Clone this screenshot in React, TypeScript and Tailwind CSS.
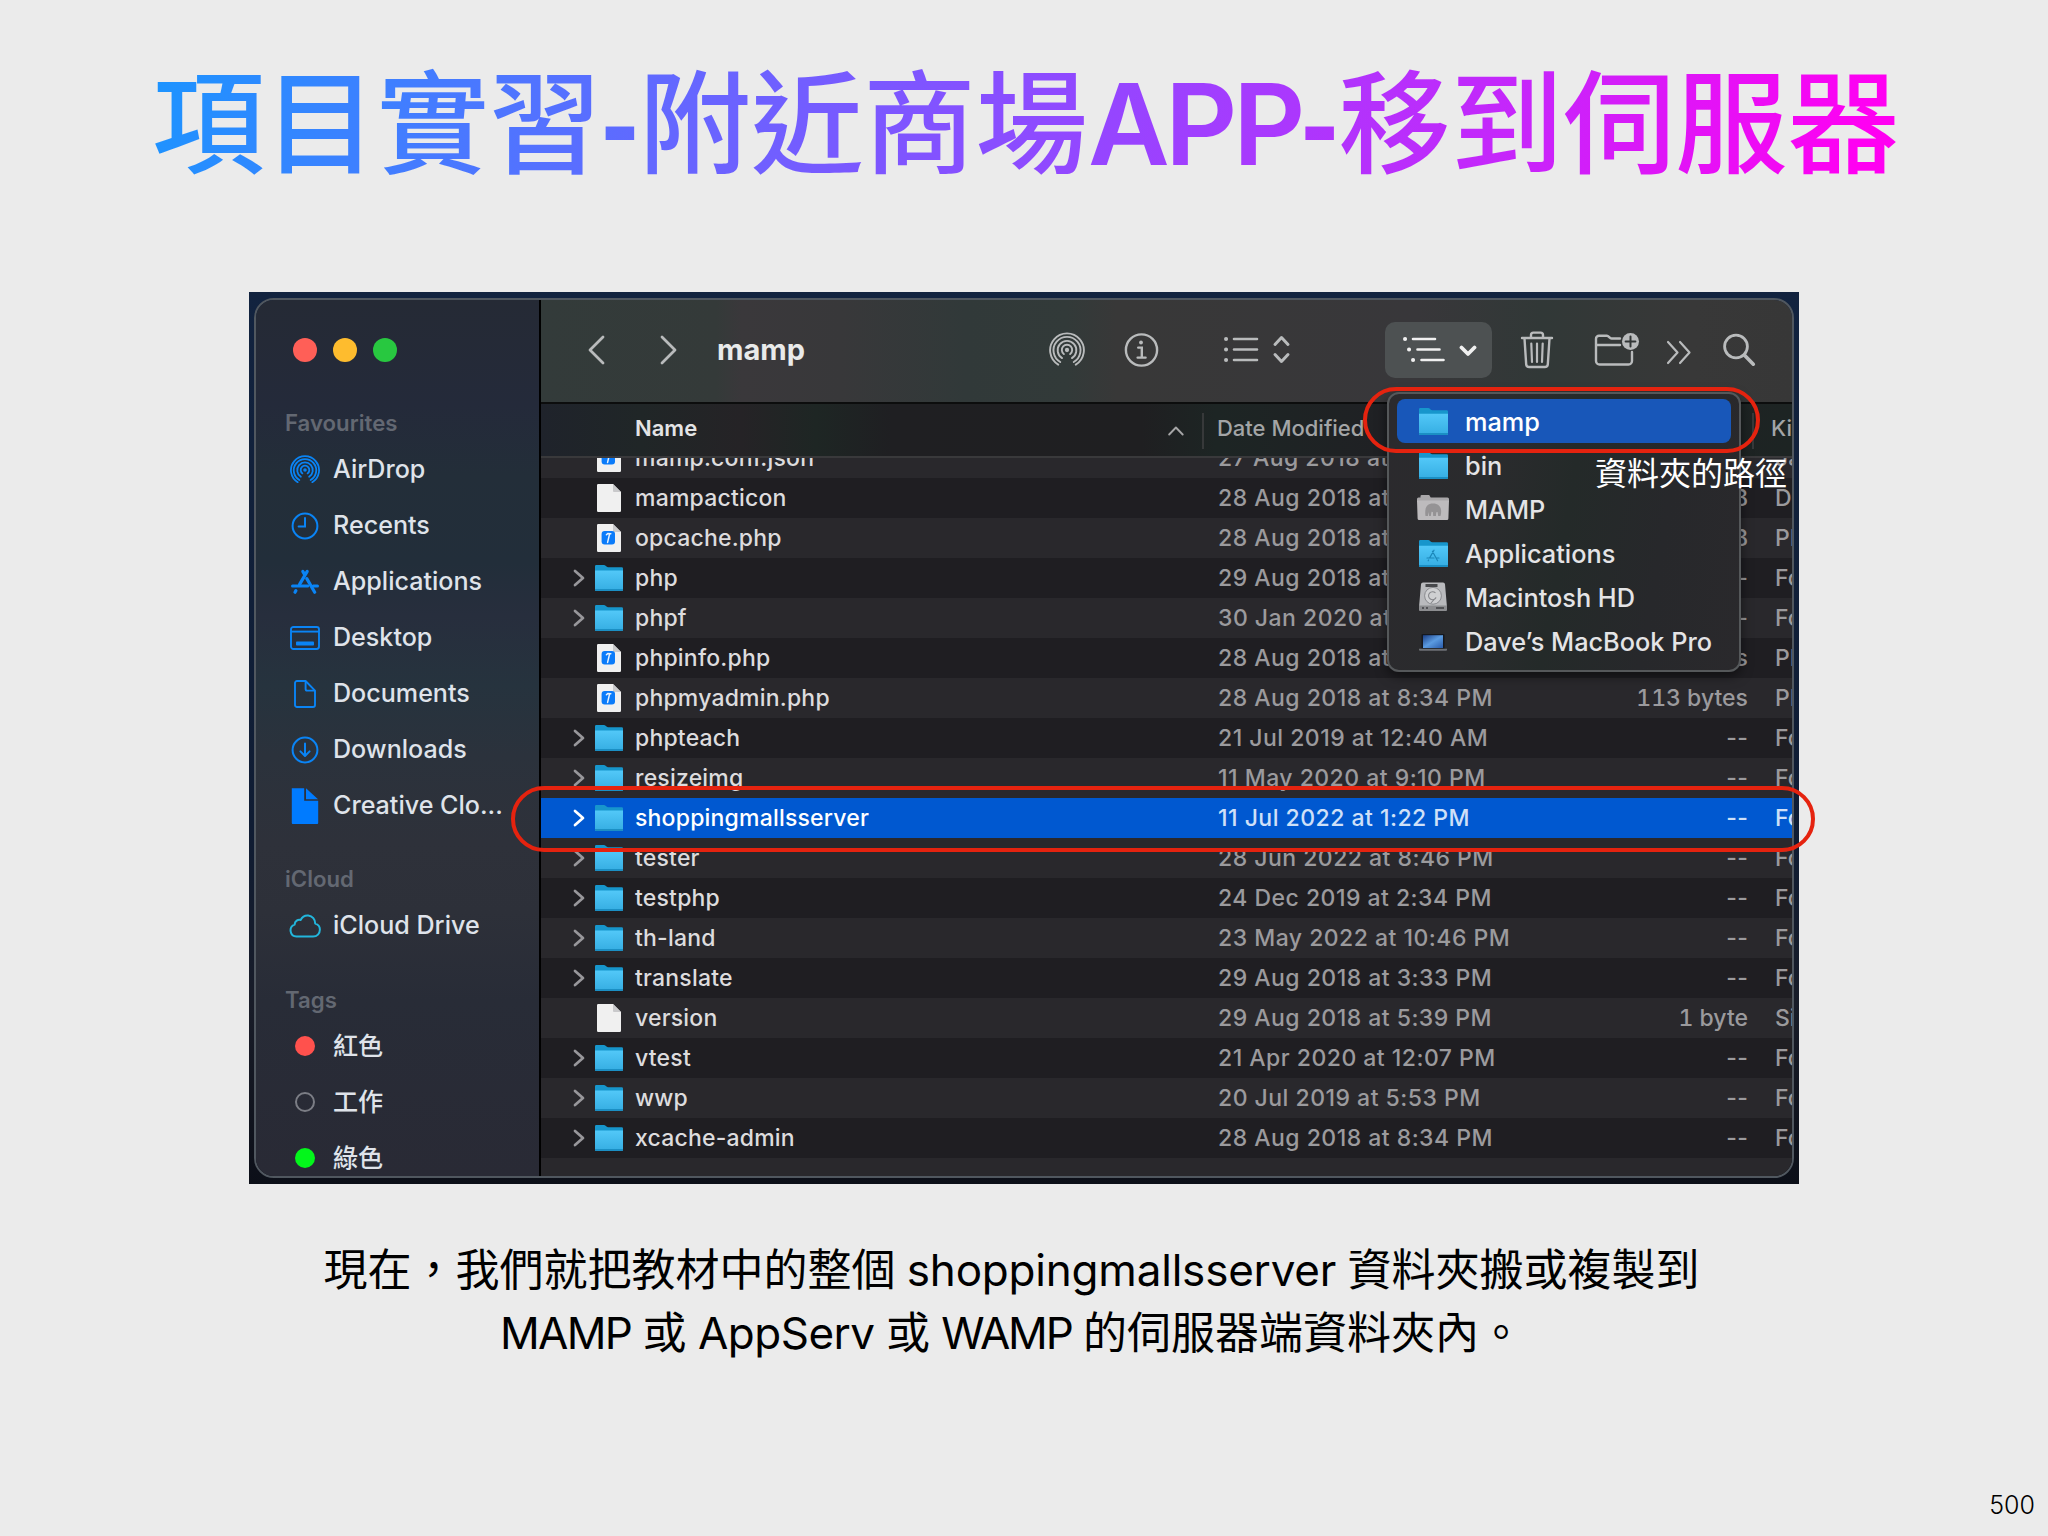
import React from "react";

const UI = "font-['Inter','Noto_Sans_CJK_TC',sans-serif]";

/* ---------- icons ---------- */

function AirDropIcon({ className, sw = 1.7 }: { className: string; sw?: number }) {
  return (
    <svg viewBox="0 0 32 32" className={className} fill="none" stroke="currentColor" strokeWidth={sw} strokeLinecap="round">
      <circle cx="16" cy="16" r="1.9" fill="currentColor" stroke="none" />
      <path d="M13.2 19.6a4.6 4.6 0 1 1 5.6 0" />
      <path d="M11.6 23.2a8.3 8.3 0 1 1 8.8 0" />
      <path d="M10 26.7a12 12 0 1 1 12 0" />
      <path d="M8.2 29a15 15 0 1 1 15.6 0" />
    </svg>
  );
}

function ClockIcon() {
  return (
    <svg viewBox="0 0 28 28" className="h-7 w-7" fill="none" stroke="currentColor" strokeWidth="2" strokeLinecap="round">
      <circle cx="14" cy="14" r="12.4" />
      <path d="M14 6v8.4H7.6" />
    </svg>
  );
}

function AppsIcon({ className = "h-7 w-7" }: { className?: string }) {
  return (
    <svg viewBox="0 0 28 28" className={className} fill="none" stroke="currentColor" strokeWidth="3.2" strokeLinecap="round">
      <path d="M11.8 3.4l1.6 2.8M16.2 3.4L8.6 16.4" />
      <path d="M1.5 18h15.2M22.2 18h4.3" strokeWidth="3" />
      <path d="M15.8 10.6l7.9 13.6" />
      <path d="M4.9 22.6l-.9 1.6" />
    </svg>
  );
}

function DesktopIcon() {
  return (
    <svg viewBox="0 0 30 24" className="h-6 w-[30px]" fill="none" stroke="currentColor" strokeWidth="1.9">
      <rect x="1" y="1" width="28" height="22" rx="2.4" />
      <path d="M1 5.6h28" />
      <rect x="6" y="15.6" width="18" height="4" rx=".8" fill="currentColor" stroke="none" />
    </svg>
  );
}

function DocIcon() {
  return (
    <svg viewBox="0 0 22 28" className="h-7 w-[22px]" fill="none" stroke="currentColor" strokeWidth="1.9" strokeLinejoin="round">
      <path d="M3 1h8.6L21 10.6V25a2 2 0 0 1-2 2H3a2 2 0 0 1-2-2V3a2 2 0 0 1 2-2z" />
      <path d="M11.6 1v8a1.6 1.6 0 0 0 1.6 1.6H21" />
    </svg>
  );
}

function DownloadIcon() {
  return (
    <svg viewBox="0 0 28 28" className="h-7 w-7" fill="none" stroke="currentColor" strokeWidth="2" strokeLinecap="round" strokeLinejoin="round">
      <circle cx="14" cy="14" r="12.4" />
      <path d="M14 7.6v12.2M9.4 15.4l4.6 4.6 4.6-4.6" />
    </svg>
  );
}

function SolidDocIcon() {
  return (
    <svg viewBox="0 0 28 38" className="h-[38px] w-7 text-[#007bff]" fill="currentColor">
      <path d="M.8 1.2h12.4v12.6h14V36a1 1 0 0 1-1 1H1.8a1 1 0 0 1-1-1z" />
      <path d="M15 1.2l12 11H15z" />
    </svg>
  );
}

function CloudIcon() {
  return (
    <svg viewBox="0 0 32 24" className="h-6 w-8 text-[#22b6dc]" fill="none" stroke="currentColor" strokeWidth="2" strokeLinejoin="round">
      <path d="M7.5 22.6a6.2 6.2 0 0 1-1.9-12c.2-3.7 3.4-5.4 6-4.6 1.6-3 4.4-4.7 7.6-4.4 4.3.4 7 3.9 7 8 2.9.8 4.7 3 4.7 6 0 4-2.9 7-6.8 7z" />
    </svg>
  );
}

function Folder({ className = "h-[26px] w-7" }: { className?: string }) {
  return (
    <svg viewBox="0 0 28 26" className={className} preserveAspectRatio="none">
      <defs>
        <linearGradient id="fld" x1="0" y1="0" x2="0" y2="1">
          <stop offset="0" stopColor="#52c8f8" />
          <stop offset="1" stopColor="#35ade2" />
        </linearGradient>
      </defs>
      <path d="M0 1.2A1.2 1.2 0 0 1 1.2 0h7.6c1.6 0 2.6 2.2 4.2 2.2h13.800A1.2 1.2 0 0 1 28 3.4V8H0z" fill="#1796cc" />
      <path d="M0 5.6h28v19.2a1.2 1.2 0 0 1-1.2 1.2H1.2A1.2 1.2 0 0 1 0 24.8z" fill="url(#fld)" />
      <path d="M0 24h28v.8a1.2 1.2 0 0 1-1.2 1.2H1.2A1.2 1.2 0 0 1 0 24.8z" fill="#1b8fc4" />
    </svg>
  );
}

function FileIcon({ badge }: { badge?: boolean }) {
  return (
    <svg viewBox="0 0 24 28" className="h-7 w-6">
      <path d="M1.2 0H16l8 8v18.8a1.2 1.2 0 0 1-1.2 1.2H1.2A1.2 1.2 0 0 1 0 26.8V1.2A1.2 1.2 0 0 1 1.2 0z" fill="#f0f0f0" />
      <path d="M16 0l8 8h-7a1 1 0 0 1-1-1z" fill="#c9c9cb" />
      {badge && <rect x="4.6" y="7" width="13.4" height="13.6" rx="3" fill="#0a7bfa" />}
      {badge && <path d="M9.4 10.8l1.4-1.2 3 .2M12.6 9.8L10.6 18.4" stroke="#e6f1ff" strokeWidth="1.5" fill="none" strokeLinecap="round" />}
    </svg>
  );
}

function MampFolder() {
  return (
    <svg viewBox="0 0 32 30" className="h-[30px] w-8">
      <path d="M0 5a1.5 1.5 0 0 1 1.5-1.5h2V2.2A1.2 1.2 0 0 1 4.7 1h7.5l1.5 2.5h16.8A1.5 1.5 0 0 1 32 5v3H0z" fill="#a9a7a9" />
      <path d="M0 6.5h32l-.6 18a1.5 1.5 0 0 1-1.5 1.5H2.1a1.5 1.5 0 0 1-1.5-1.5z" fill="#bdbbbd" />
      <path d="M8.5 22c-1-7 .5-12.500 7.500-12.500s9.500 5.500 7.500 12.500h-2.300l-.6-4-1.300.2-.4 3.800h-2.700l-.3-4-1.400-.2-.7 4.200h-1.700l-.4-4-.8 4z" fill="#959395" />
    </svg>
  );
}

function AppsFolder() {
  return (
    <span className="relative flex h-[27px] w-[29px]">
      <Folder className="h-[27px] w-[29px]" />
      <span className="absolute inset-x-0 top-[9px] flex justify-center text-[#1b86b8]">
        <svg viewBox="0 0 14 14" className="h-3.5 w-3.5" fill="none" stroke="currentColor" strokeWidth="1.2" strokeLinecap="round">
          <path d="M8 1.2L3.8 8.6M6.4 2.2l5.2 9.6M1 9h7M10.800 9H13M2.600 11l-.4.8" />
        </svg>
      </span>
    </span>
  );
}

function DiskIcon() {
  return (
    <svg viewBox="0 0 28 30" className="h-[30px] w-7">
      <path d="M4 .5h20a2 2 0 0 1 2 1.800l1.800 20.700v4.500a1.500 1.500 0 0 1-1.500 1.500H1.700A1.500 1.500 0 0 1 .2 27.500V23L2 2.300A2 2 0 0 1 4 .5z" fill="#b9babd" />
      <path d="M.2 23.500h27.600v4a1.500 1.500 0 0 1-1.500 1.500H1.700a1.500 1.500 0 0 1-1.500-1.500z" fill="#8c8d90" />
      <rect x="6.500" y="2" width="12" height="3" fill="#47484b" />
      <circle cx="14" cy="13.800" r="8.400" fill="#cfd0d2" stroke="#85868a" strokeWidth=".9" />
      <path d="M16.500 11a4 4 0 1 0 .6 4.500M17 15.500l-5 5.500" fill="none" stroke="#85868a" strokeWidth="1.100" />
      <path d="M3 26h2M7 26h2M17 26h8" stroke="#3f4043" strokeWidth="1.400" />
    </svg>
  );
}

function LaptopIcon() {
  return (
    <svg viewBox="0 0 28 20" className="mt-1 h-5 w-7">
      <defs>
        <linearGradient id="scr" x1="0" y1="0" x2="1" y2="1">
          <stop offset="0" stopColor="#1b3f86" />
          <stop offset=".5" stopColor="#5b9be0" />
          <stop offset="1" stopColor="#2a5cab" />
        </linearGradient>
      </defs>
      <rect x="2.500" y="1" width="23" height="15.500" rx="1" fill="#15181f" />
      <rect x="4" y="2.200" width="20" height="12.800" fill="url(#scr)" />
      <path d="M0 15.800h28v1a1 1 0 0 1-1 1H1a1 1 0 0 1-1-1z" fill="#6d7075" />
    </svg>
  );
}

/* ---------- data ---------- */

type Row = { n: string; t: "d" | "f" | "c"; date: string; size: string; kind: string; sel?: boolean };
const rows: Row[] = [
  { n: "mamp.conf.json", t: "c", date: "27 Aug 2018 at", size: "", kind: "Ja" },
  { n: "mampacticon", t: "f", date: "28 Aug 2018 at", size: "KB", kind: "Do" },
  { n: "opcache.php", t: "c", date: "28 Aug 2018 at", size: "KB", kind: "PH" },
  { n: "php", t: "d", date: "29 Aug 2018 at", size: "--", kind: "Fo" },
  { n: "phpf", t: "d", date: "30 Jan 2020 at", size: "--", kind: "Fo" },
  { n: "phpinfo.php", t: "c", date: "28 Aug 2018 at", size: "bytes", kind: "PH" },
  { n: "phpmyadmin.php", t: "c", date: "28 Aug 2018 at 8:34 PM", size: "113 bytes", kind: "PH" },
  { n: "phpteach", t: "d", date: "21 Jul 2019 at 12:40 AM", size: "--", kind: "Fo" },
  { n: "resizeimg", t: "d", date: "11 May 2020 at 9:10 PM", size: "--", kind: "Fo" },
  { n: "shoppingmallsserver", t: "d", date: "11 Jul 2022 at 1:22 PM", size: "--", kind: "Fo", sel: true },
  { n: "tester", t: "d", date: "28 Jun 2022 at 8:46 PM", size: "--", kind: "Fo" },
  { n: "testphp", t: "d", date: "24 Dec 2019 at 2:34 PM", size: "--", kind: "Fo" },
  { n: "th-land", t: "d", date: "23 May 2022 at 10:46 PM", size: "--", kind: "Fo" },
  { n: "translate", t: "d", date: "29 Aug 2018 at 3:33 PM", size: "--", kind: "Fo" },
  { n: "version", t: "f", date: "29 Aug 2018 at 5:39 PM", size: "1 byte", kind: "Si" },
  { n: "vtest", t: "d", date: "21 Apr 2020 at 12:07 PM", size: "--", kind: "Fo" },
  { n: "wwp", t: "d", date: "20 Jul 2019 at 5:53 PM", size: "--", kind: "Fo" },
  { n: "xcache-admin", t: "d", date: "28 Aug 2018 at 8:34 PM", size: "--", kind: "Fo" },
];

const favourites = [
  { icon: <AirDropIcon className="h-[30px] w-[30px]" sw={1.9} />, label: "AirDrop" },
  { icon: <ClockIcon />, label: "Recents" },
  { icon: <AppsIcon />, label: "Applications" },
  { icon: <DesktopIcon />, label: "Desktop" },
  { icon: <DocIcon />, label: "Documents" },
  { icon: <DownloadIcon />, label: "Downloads" },
  { icon: <SolidDocIcon />, label: "Creative Clo..." },
];

const tags = [
  { dot: "bg-[#ff514d]", label: "紅色" },
  { dot: "border-2 border-[#7b7d85]", label: "工作" },
  { dot: "bg-[#03f61b]", label: "綠色" },
];

const pathMenu = [
  { icon: <Folder className="h-[27px] w-[29px]" />, label: "mamp", active: true },
  { icon: <Folder className="h-[27px] w-[29px]" />, label: "bin" },
  { icon: <MampFolder />, label: "MAMP" },
  { icon: <AppsFolder />, label: "Applications" },
  { icon: <DiskIcon />, label: "Macintosh HD" },
  { icon: <LaptopIcon />, label: "Dave’s MacBook Pro" },
];

/* ---------- pieces ---------- */

function SideItem({ icon, label }: { icon: React.ReactNode; label: string }) {
  return (
    <div className="flex h-14 items-center pt-px text-[25.1px] font-medium text-[#dfe3ea]">
      <span className="flex w-8 shrink-0 justify-center text-[#0a84f5]">{icon}</span>
      <span className="ml-3 whitespace-nowrap">{label}</span>
    </div>
  );
}

function SideHead({ children, className }: { children: string; className: string }) {
  return (
    <div className={`flex h-9 items-center text-[22.2px] font-semibold text-[#636872] ${className}`}>
      <span>{children}</span>
    </div>
  );
}

function Sidebar() {
  return (
    <aside className="flex w-[283px] shrink-0 flex-col overflow-hidden bg-[linear-gradient(180deg,#252a35_0%,#242a3a_12%,#232e39_20%,#222e3a_30%,#272e3d_36%,#26333e_44%,#2b323c_52%,#2e313a_62%,#2d3039_70%,#282c37_80%,#292a35_100%)] pl-[29px]">
      <div className="mt-[38px] flex gap-4 pl-2">
        <i className="h-6 w-6 rounded-full bg-[#ff5f57]" />
        <i className="h-6 w-6 rounded-full bg-[#febc2e]" />
        <i className="h-6 w-6 rounded-full bg-[#28c840]" />
      </div>
      <SideHead className="mt-11">Favourites</SideHead>
      <div className="mt-0.5 pl-1">
        {favourites.map((f) => (
          <SideItem key={f.label} {...f} />
        ))}
      </div>
      <SideHead className="mt-[29px]">iCloud</SideHead>
      <div className="mt-0.5 pl-1">
        <SideItem icon={<CloudIcon />} label="iCloud Drive" />
      </div>
      <SideHead className="mt-[29px]">Tags</SideHead>
      <div className="mt-0.5 pl-1">
        {tags.map((t) => (
          <SideItem key={t.label} icon={<i className={`h-5 w-5 rounded-full ${t.dot}`} />} label={t.label} />
        ))}
      </div>
    </aside>
  );
}

function Toolbar() {
  return (
    <div className="flex h-[102px] shrink-0 items-center bg-[linear-gradient(90deg,#333b3a_0%,#343a39_14%,#3a383b_16%,#38383a_24%,#313939_34%,#323a39_42%,#383838_46%,#38373a_70%,#313837_80%,#383838_92%,#373737_100%)] pb-[3px] pl-[45px] text-[#b9bbbc]">
      <svg viewBox="0 0 20 32" className="h-8 w-5" fill="none" stroke="currentColor" strokeWidth="2.8" strokeLinecap="round" strokeLinejoin="round">
        <path d="M17 3L4 16l13 13" />
      </svg>
      <svg viewBox="0 0 20 32" className="ml-[52px] h-8 w-5" fill="none" stroke="currentColor" strokeWidth="2.8" strokeLinecap="round" strokeLinejoin="round">
        <path d="M4 3l13 13L4 29" />
      </svg>
      <span className="ml-[39px] w-[332px] text-[29px] font-bold text-[#e9eaea]">mamp</span>
      <AirDropIcon className="h-9 w-9" />
      <svg viewBox="0 0 36 36" className="ml-[39px] h-9 w-9" fill="none" stroke="currentColor" strokeWidth="2.4" strokeLinecap="round">
        <circle cx="17.5" cy="18" r="15.6" />
        <circle cx="17" cy="10.5" r="1.9" fill="currentColor" stroke="none" />
        <path d="M14.2 15.6h3.6v9.4M13.6 25.6h8" />
      </svg>
      <svg viewBox="0 0 68 32" className="ml-[63px] h-8 w-[68px]" fill="none" stroke="currentColor" strokeWidth="2.6" strokeLinecap="round" strokeLinejoin="round">
        <path d="M11 5h23M11 15.5h23M11 26h23" />
        <path d="M3 5h.1M3 15.5h.1M3 26h.1" strokeWidth="4" />
        <path d="M52 10.5L58.5 3.5 65 10.5M52 20.5l6.5 7 6.5-7" strokeWidth="3" />
      </svg>
      <div className="ml-[94px] flex h-14 w-[107px] items-center justify-center rounded-[10px] bg-[#4d5152] text-[#f0f0f0]">
        <svg viewBox="0 0 76 32" className="h-8 w-[76px]" fill="none" stroke="currentColor" strokeWidth="2.6" strokeLinecap="round" strokeLinejoin="round">
          <path d="M12 5h22M16.500 15.500h22M20.500 26h22" />
          <path d="M4 5h.1M8 15.500h.1M12 26h.1" strokeWidth="4" />
          <path d="M60.500 13.500l6.500 6.500 6.500-6.500" strokeWidth="3.800" />
        </svg>
      </div>
      <svg viewBox="0 0 34 38" className="ml-[28px] h-[38px] w-[34px]" fill="none" stroke="currentColor" strokeWidth="2.4" strokeLinecap="round" strokeLinejoin="round">
        <path d="M2 7h30M11 6.500V4a2.400 2.400 0 0 1 2.400-2.400h7.200A2.400 2.400 0 0 1 23 4v2.500" />
        <path d="M4.500 7.500l1.700 25.800A3 3 0 0 0 9.200 36h15.600a3 3 0 0 0 3-2.700L29.500 7.500" />
        <path d="M11.300 12.500l.7 18.500M17 12.500V31M22.700 12.500L22 31" strokeWidth="2.200" />
      </svg>
      <svg viewBox="0 0 46 36" className="ml-[40px] h-9 w-[46px]" fill="none" stroke="currentColor" strokeWidth="2.4" strokeLinecap="round" strokeLinejoin="round">
        <path d="M26 6.500H17.500c-2 0-2.600-2.700-4.600-2.700H5A3 3 0 0 0 2 6.800V29a3.500 3.500 0 0 0 3.500 3.500h29A3.500 3.500 0 0 0 38 29V20M2 13h24" />
        <circle cx="36.500" cy="9.500" r="8.500" fill="currentColor" stroke="none" />
        <path d="M36.500 4.600v9.800M31.600 9.500h9.800" stroke="#323636" strokeWidth="2" />
      </svg>
      <svg viewBox="0 0 28 26" className="ml-[25px] mt-1 h-[26px] w-7" fill="none" stroke="currentColor" strokeWidth="2.2" strokeLinecap="round" strokeLinejoin="round">
        <path d="M3 3l9.500 10.500L3 24M15 3l9.500 10.500L15 24" />
      </svg>
      <svg viewBox="0 0 34 34" className="ml-[29px] h-[34px] w-[34px]" fill="none" stroke="currentColor" strokeWidth="2.8" strokeLinecap="round">
        <circle cx="14" cy="13.500" r="11.400" />
        <path d="M22.300 22l9 9.200" strokeWidth="3.600" />
      </svg>
    </div>
  );
}

function ListHeader() {
  return (
    <div className="flex h-14 shrink-0 items-center border-b-2 border-t-2 border-b-[#39393b] border-t-[#0c0d0d] bg-[linear-gradient(90deg,#1f232b_0%,#202627_8%,#252326_16%,#1e2624_22%,#1f1f22_28%,#1f1f21_48%,#1d2524_54%,#202024_70%,#1d2423_100%)] pb-[3px]">
      <span className="ml-[94px] w-[538px] text-[22px] font-semibold text-[#e4e4e5]">Name</span>
      <svg viewBox="0 0 16 10" className="mt-1 h-2.5 w-4" fill="none" stroke="#a5a5a6" strokeWidth="1.9" strokeLinecap="round" strokeLinejoin="round">
        <path d="M1.200 8.500L8 1.500l6.800 7" />
      </svg>
      <i className="ml-[18px] mt-1 h-9 w-0.5 bg-[#37393a]" />
      <span className="ml-[13px] w-[540px] text-[22px] font-medium text-[#a3a5a6]">Date Modified</span>
      <i className="mt-1 h-9 w-0.5 bg-[#37393a]" />
      <span className="ml-[17px] text-[22px] font-medium text-[#a3a5a6]">Ki</span>
    </div>
  );
}

function FileRow({ r, i }: { r: Row; i: number }) {
  const bg = r.sel ? "bg-[#0058d0]" : i % 2 === 0 ? "bg-[#29282c]" : "bg-[#1f1e22]";
  const meta = r.sel ? "text-[#cfe0f8]" : "text-[#9b9a9d]";
  const sizeStyle = r.size === "--" ? "tracking-[0.2px]" : "tabular-nums";
  return (
    <div className={`flex h-10 shrink-0 items-center whitespace-nowrap text-[23px] font-medium ${bg}`}>
      <span className="ml-8 flex w-3 shrink-0 justify-center">
        {r.t === "d" && (
          <svg viewBox="0 0 12 18" className="h-[18px] w-3" fill="none" stroke={r.sel ? "#ffffff" : "#98979b"} strokeWidth="2.7" strokeLinecap="round" strokeLinejoin="round">
            <path d="M2 2l8 7-8 7" />
          </svg>
        )}
      </span>
      <span className="ml-2.5 flex w-7 shrink-0 justify-center">
        {r.t === "d" ? <Folder /> : <FileIcon badge={r.t === "c"} />}
      </span>
      <span className={`ml-3 shrink-0 tracking-[0.2px] ${r.sel ? "text-white" : "text-[#dddcde]"}`}>{r.n}</span>
      <span className="grow" />
      <span className={`w-[400px] shrink-0 tracking-[0.48px] ${meta}`}>{r.date}</span>
      <span className={`w-[130px] shrink-0 text-right ${sizeStyle} ${meta}`}>{r.size}</span>
      <span className={`ml-[27px] w-[17px] shrink-0 overflow-hidden ${meta}`}>{r.kind}</span>
    </div>
  );
}

function PathMenu() {
  return (
    <div className="absolute left-[1138px] top-[100px] flex h-[280px] w-[354px] flex-col rounded-xl border-2 border-[#55585a] bg-[linear-gradient(100deg,#2b2a2d_0%,#2a2b2d_30%,#242a29_50%,#27282b_75%,#2a292c_100%)] px-2 pt-[5px] shadow-[0_4px_12px_rgba(0,0,0,0.5)]">
      {pathMenu.map((m) => (
        <div key={m.label} className={`flex h-11 shrink-0 items-center rounded-lg text-[25.3px] font-medium ${m.active ? "bg-[#1857b9] text-white" : "text-[#e4e4e6]"}`}>
          <span className="ml-5 flex w-8 shrink-0 justify-center">{m.icon}</span>
          <span className="ml-4 whitespace-nowrap pt-0.5">{m.label}</span>
        </div>
      ))}
    </div>
  );
}

function FinderShot() {
  return (
    <figure className={`relative mx-auto mt-[102px] h-[892px] w-[1550px] bg-[linear-gradient(180deg,#12233f_0%,#0f1c33_60%,#181c28_80%,#0c0f18_100%)] pl-[5px] pt-1.5 ${UI}`}>
      <div className="flex h-[880px] w-[1540px] overflow-hidden rounded-[20px] border-2 border-[#50575f]">
        <Sidebar />
        <main className="flex min-w-0 grow flex-col border-l-2 border-black">
          <Toolbar />
          <ListHeader />
          <div className="flex min-h-0 grow flex-col overflow-hidden bg-[#29282c]">
            <div className="-mt-5 flex flex-col">
              {rows.map((r, i) => (
                <FileRow key={r.n} r={r} i={i} />
              ))}
            </div>
          </div>
        </main>
      </div>
      <PathMenu />
      <div className="absolute left-[1114px] top-[95px] h-[66px] w-[397px] rounded-[33px] border-4 border-[#e5230f]" />
      <div className="absolute left-[262px] top-[494px] h-[66px] w-[1304px] rounded-[33px] border-4 border-[#e5230f]" />
      <figcaption className="absolute left-[1346px] top-[158px] whitespace-nowrap text-[32px] leading-[48px] text-white">資料夾的路徑</figcaption>
    </figure>
  );
}

export default function App() {
  return (
    <div lang="zh-Hant-TW" className="relative flex h-[1536px] w-[2048px] flex-col overflow-hidden bg-[#ebebeb]">
      <h1 className="mx-auto -mb-[9px] mt-[49px] flex h-[150px] items-center whitespace-nowrap bg-[linear-gradient(105deg,#1a95ff_0%,#3a82ff_12%,#6a63ff_33%,#9645ff_55%,#cc22fa_80%,#ff00f2_97%)] bg-clip-text pl-1 font-['Inter','Noto_Sans_CJK_TC',sans-serif] text-[112.3px] font-medium text-transparent">
        <span>項目實習</span>
        <span className="font-['Liberation_Sans'] font-bold">-</span>
        <span>附近商場</span>
        <span className="font-semibold tracking-[-4.5px]">APP</span>
        <span className="font-['Liberation_Sans'] font-bold">-</span>
        <span>移到伺服器</span>
      </h1>
      <FinderShot />
      <p className="mt-[55px] pr-[25px] text-center font-['Inter','Noto_Sans_CJK_TC',sans-serif] text-[44px] leading-[63px] text-black [word-spacing:-1px]">
        現在，我們就把教材中的整個 <span className="tracking-[-0.2px]">shoppingmallsserver</span> 資料夾搬或複製到
        <br />
        <span className="tracking-[-1.7px]">MAMP</span> 或 <span className="tracking-[-0.5px]">AppServ</span> 或 <span className="tracking-[-2.2px]">WAMP</span> 的伺服器端資料夾內。
      </p>
      <footer className="absolute bottom-[15px] right-[13px] font-['Inter',sans-serif] text-[25px] font-light leading-8 text-black">500</footer>
    </div>
  );
}
